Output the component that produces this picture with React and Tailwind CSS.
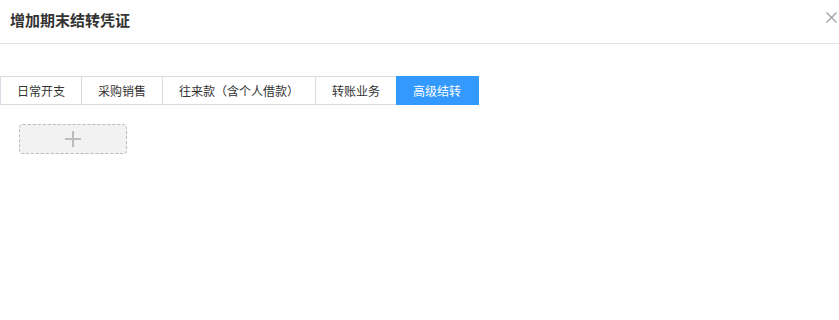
import React from "react";

const tabs = ["日常开支", "采购销售", "往来款（含个人借款）", "转账业务", "高级结转"];

export default function App() {
  return (
    <div
      className="w-[839px] h-[320px] bg-white overflow-hidden"
      style={{ fontFamily: '"Noto Sans CJK SC", "Noto Sans", sans-serif' }}
    >
      <div className="h-[44px] border-b border-[#e5e5e5] flex items-center justify-between pl-[10px] pr-[2px]">
        <div className="text-[15px] font-bold text-[#333] leading-none -mt-[5px]">增加期末结转凭证</div>
        <svg width="11" height="11" viewBox="0 0 11 11" className="-mt-[9px]">
          <path d="M0.5 0.5 L10.5 10.5 M10.5 0.5 L0.5 10.5" stroke="#a0a0a0" strokeWidth="1.3" fill="none" />
        </svg>
      </div>
      <div className="pt-[32px] flex">
        {tabs.map((t, i) => {
          const active = i === tabs.length - 1;
          return (
            <div
              key={t}
              className={
                "h-[29px] flex items-center text-[12px] " +
                (active
                  ? "bg-[#3399ff] text-white pl-[17px] pr-[18px] border-y border-[#3399ff]"
                  : "text-[#333] px-[16px] border-y border-l border-[#d7dde4]")
              }
            >
              {t}
            </div>
          );
        })}
      </div>
      <div className="pl-[19px] pt-[19px]">
        <div className="w-[108px] h-[30px] bg-[#f2f2f2] border border-dashed border-[#bbbbbb] rounded-[4px] flex items-center justify-center">
          <svg width="16" height="16" viewBox="0 0 16 16">
            <path d="M8 0 V16 M0 8 H16" stroke="#bcbcbc" strokeWidth="2" />
          </svg>
        </div>
      </div>
    </div>
  );
}
